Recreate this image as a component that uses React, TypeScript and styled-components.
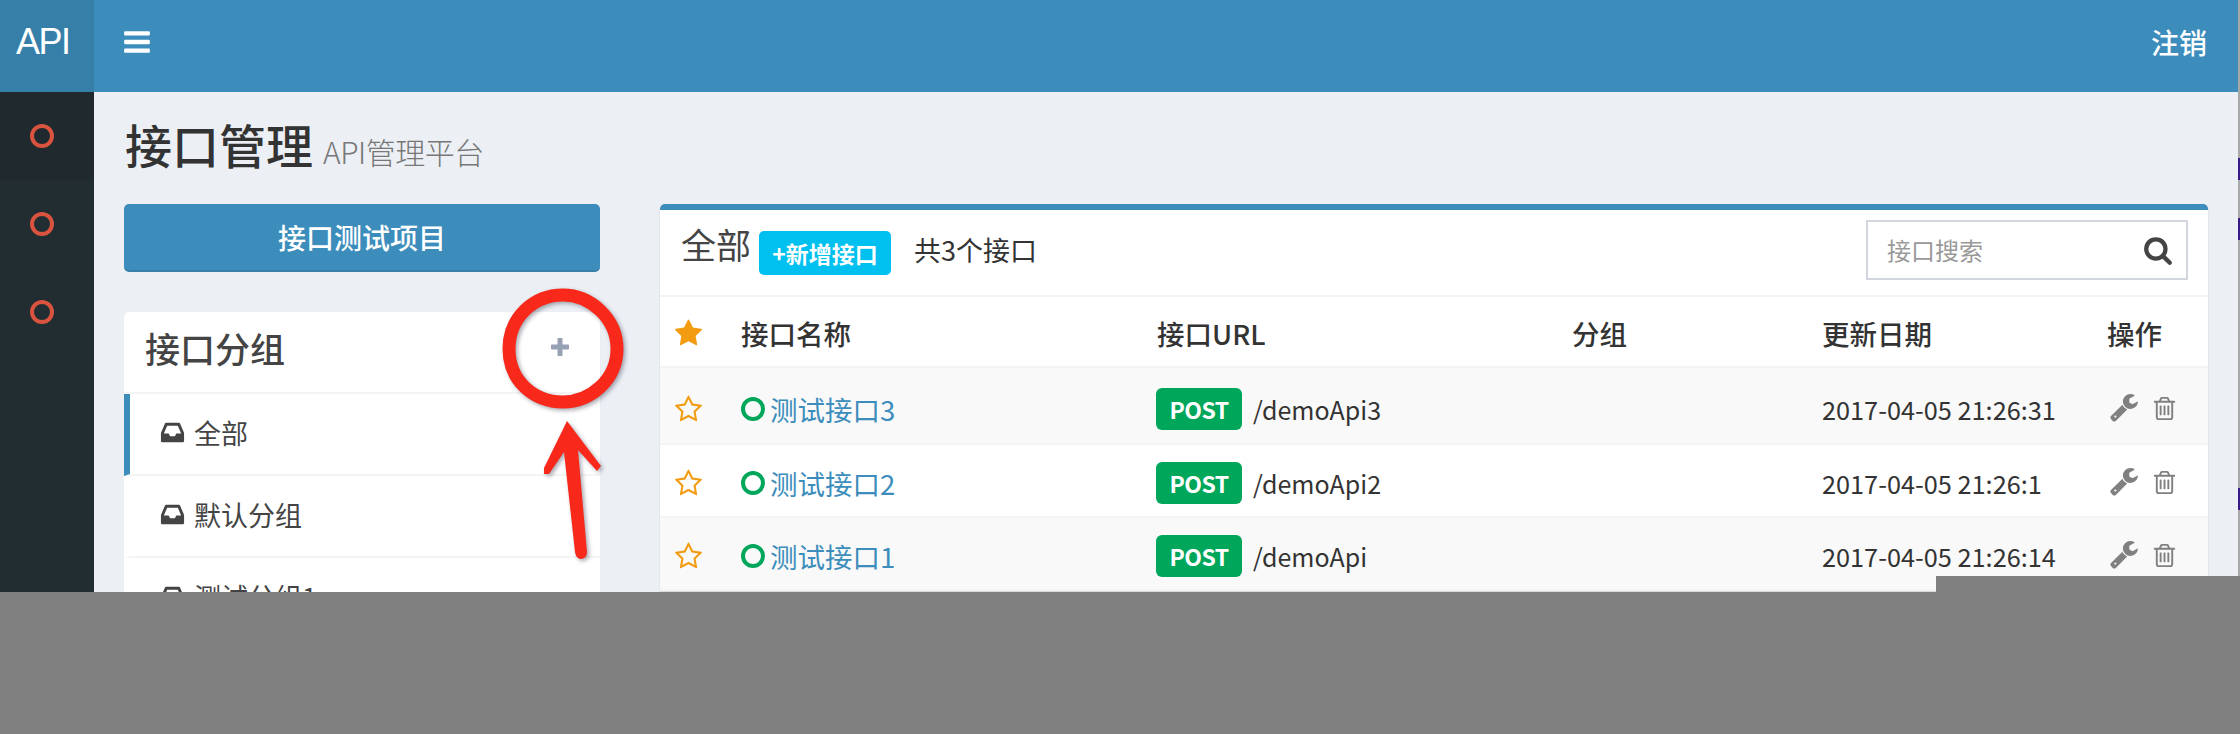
import React from "react";
import styled, { createGlobalStyle } from "styled-components";

const GlobalStyle = createGlobalStyle`
    html, body {
        margin: 0;
        padding: 0;
        background-color: #808080;
    }
    body {
        font-family: "Noto Sans CJK SC", "Noto Sans", sans-serif;
        color: #333;
    }
    * {
        box-sizing: border-box;
    }
`;

const ICONS: Record<string, string> = {
    bars: "M1664 1344v128q0 26-19 45t-45 19h-1408q-26 0-45-19t-19-45v-128q0-26 19-45t45-19h1408q26 0 45 19t19 45zm0-512v128q0 26-19 45t-45 19h-1408q-26 0-45-19t-19-45v-128q0-26 19-45t45-19h1408q26 0 45 19t19 45zm0-512v128q0 26-19 45t-45 19h-1408q-26 0-45-19t-19-45v-128q0-26 19-45t45-19h1408q26 0 45 19t19 45z",
    inbox: "M1151 960h316q-1-3-2.5-8.5t-2.5-7.5l-212-496h-708l-212 496q-1 3-2.5 8.5t-2.5 7.5h316l95 192h320zm513 30v482q0 26-19 45t-45 19h-1408q-26 0-45-19t-19-45v-482q0-62 25-123l238-552q10-25 36.5-42t52.5-17h832q26 0 52.5 17t36.5 42l238 552q25 61 25 123z",
    search: "M1216 832q0-185-131.5-316.5t-316.5-131.5-316.5 131.5-131.5 316.5 131.5 316.5 316.5 131.5 316.5-131.5 131.5-316.5zm512 832q0 52-38 90t-90 38q-54 0-90-38l-343-342q-179 124-399 124-143 0-273.5-55.5t-225-150-150-225-55.5-273.5 55.5-273.5 150-225 225-150 273.5-55.5 273.5 55.5 225 150 150 225 55.5 273.5q0 220-124 399l343 343q37 37 37 90z",
    star: "M1728 647q0 22-26 48l-363 354 86 500q1 7 1 20 0 21-10.5 35.5t-30.5 14.5q-19 0-40-12l-449-236-449 236q-22 12-40 12-21 0-31.5-14.5t-10.5-35.5q0-6 2-20l86-500-364-354q-25-27-25-48 0-37 56-46l502-73 225-455q19-41 49-41t49 41l225 455 502 73q56 9 56 46z",
    starO: "M1201 1004l306-297-422-62-189-382-189 382-422 62 306 297-73 421 378-199 377 199zm527-357q0 22-26 48l-363 354 86 500q1 7 1 20 0 50-41 50-19 0-40-12l-449-236-449 236q-22 12-40 12-21 0-31.5-14.5t-10.5-35.5q0-6 2-20l86-500-364-354q-25-27-25-48 0-37 56-46l502-73 225-455q19-41 49-41t49 41l225 455 502 73q56 9 56 46z",
    wrench: "M384 1344q0-26-19-45t-45-19-45 19-19 45 19 45 45 19 45-19 19-45zm644-420l-682 682q-37 37-90 37-52 0-91-37l-106-108q-38-36-38-90 0-53 38-91l681-681q39 98 114.5 173.5t173.5 114.5zm634-435q0 39-23 106-47 134-164.5 217.5t-258.5 83.5q-185 0-316.5-131.5t-131.5-316.5 131.5-316.5 316.5-131.5q58 0 121.5 16.5t107.5 46.5q16 11 16 28t-16 28l-293 169v224l193 107q5-3 79-48.5t135.5-81 70.5-35.5q15 0 23.5 10t8.5 25z",
    trash: "M704 736v576q0 14-9 23t-23 9h-64q-14 0-23-9t-9-23v-576q0-14 9-23t23-9h64q14 0 23 9t9 23zm256 0v576q0 14-9 23t-23 9h-64q-14 0-23-9t-9-23v-576q0-14 9-23t23-9h64q14 0 23 9t9 23zm256 0v576q0 14-9 23t-23 9h-64q-14 0-23-9t-9-23v-576q0-14 9-23t23-9h64q14 0 23 9t9 23zm128 724v-948h-896v948q0 22 7 40.5t14.5 27 10.5 8.5h832q3 0 10.5-8.5t14.5-27 7-40.5zm-672-1076h448l-48-117q-7-9-17-11h-317q-10 2-17 11zm928 32v64q0 14-9 23t-23 9h-96v948q0 83-47 143.5t-113 60.5h-832q-66 0-113-58.5t-47-141.5v-952h-96q-14 0-23-9t-9-23v-64q0-14 9-23t23-9h309l70-167q15-37 54-63t79-26h320q40 0 79 26t54 63l70 167h309q14 0 23 9t9 23z",
};

const IconSvg = styled.svg<{ $size: number; $color: string }>`
    width: ${(p) => p.$size}px;
    height: ${(p) => p.$size}px;
    flex: none;
    fill: ${(p) => p.$color};
`;

const Icon = ({ name, size, color }: { name: string; size: number; color: string }) => (
    <IconSvg viewBox="0 0 1792 1792" $size={size} $color={color}>
        <path d={ICONS[name]} />
    </IconSvg>
);

const Ring = styled.span<{ $color: string }>`
    display: block;
    flex: none;
    width: 24px;
    height: 24px;
    border-radius: 50%;
    border: 4px solid ${(p) => p.$color};
`;

const Page = styled.div`
    position: relative;
    display: flex;
    height: 592px;
    width: 2240px;
    overflow: hidden;
`;

const Shell = styled.div`
    width: 2238px;
    display: flex;
    flex-direction: column;
    background-color: #ecf0f5;
`;

const EdgeStrip = styled.div`
    position: relative;
    width: 2px;
    background-color: #a8a8a8;
`;

const EdgeTick = styled.span<{ $top: number }>`
    position: absolute;
    left: 0;
    top: ${(p) => p.$top}px;
    width: 2px;
    height: 22px;
    background-color: #3a1a86;
`;

const TopBar = styled.header`
    display: flex;
    align-items: center;
    height: 92px;
    flex: none;
    background-color: #3c8dbc;
    color: #fff;
`;

const Logo = styled.div`
    width: 94px;
    height: 100%;
    flex: none;
    display: flex;
    align-items: center;
    padding: 0 0 8px 16px;
    background-color: #367fa9;
    font-family: "Liberation Sans", sans-serif;
    font-size: 36px;
    letter-spacing: -1.5px;
`;

const MenuToggle = styled.div`
    display: flex;
    margin-left: 28px;
    margin-top: -8px;
`;

const Logout = styled.div`
    margin-left: auto;
    margin-right: 31px;
    font-size: 28px;
    font-weight: 500;
    margin-top: -8px;
`;

const Body = styled.div`
    flex: 1;
    display: flex;
    min-height: 0;
`;

const SideNav = styled.nav`
    width: 94px;
    flex: none;
    background-color: #222d32;
`;

const SideItem = styled.div<{ $active?: boolean }>`
    height: 88px;
    display: flex;
    align-items: center;
    padding-left: 30px;
    background-color: ${(p) => (p.$active ? "#1f292e" : "transparent")};
`;

const Content = styled.main`
    flex: 1;
    padding: 0 30px;
    min-width: 0;
`;

const PageTitle = styled.div`
    height: 112px;
    display: flex;
    align-items: baseline;
    padding: 18px 0 0 1px;
    gap: 10px;
`;

const TitleText = styled.h1`
    margin: 0;
    font-size: 47px;
    line-height: 68px;
    font-weight: 500;
    color: #333;
`;

const TitleSub = styled.small`
    font-size: 30px;
    font-weight: 300;
    color: #777;
    letter-spacing: -0.5px;
`;

const Columns = styled.div`
    display: flex;
    align-items: flex-start;
    gap: 60px;
`;

const LeftColumn = styled.div`
    width: 476px;
    flex: none;
    display: flex;
    flex-direction: column;
    gap: 40px;
`;

const ProjectButton = styled.div`
    height: 68px;
    display: flex;
    align-items: center;
    justify-content: center;
    border-radius: 5px;
    border-bottom: 2px solid #367fa9;
    background-color: #3c8dbc;
    color: #fff;
    font-size: 28px;
    font-weight: 500;
`;

const GroupBox = styled.section`
    background-color: #fff;
    border-radius: 5px 5px 0 0;
    box-shadow: 0 1px 1px rgba(0, 0, 0, 0.1);
`;

const GroupHeader = styled.div`
    height: 82px;
    display: flex;
    align-items: center;
    justify-content: space-between;
    padding: 0 30px 10px 21px;
    border-bottom: 2px solid #f4f4f4;
`;

const GroupTitle = styled.h3`
    margin: 0;
    font-size: 35px;
    font-weight: 500;
    color: #444;
`;

const PlusIcon = styled.svg`
    width: 20px;
    height: 20px;
    fill: #97a0b3;
`;

const GroupItem = styled.div<{ $active?: boolean }>`
    height: 82px;
    display: flex;
    align-items: center;
    gap: 8px;
    padding: 0 0 4px 29px;
    font-size: 27px;
    color: #444;
    border-left: 6px solid ${(p) => (p.$active ? "#3c8dbc" : "transparent")};
    border-bottom: 2px solid #f4f4f4;
`;

const ApiPanel = styled.section`
    flex: 1;
    min-width: 0;
    background-color: #fff;
    border-top: 6px solid #3c8dbc;
    border-radius: 5px 5px 0 0;
    box-shadow: 0 1px 2px rgba(0, 0, 0, 0.12);
`;

const PanelHeader = styled.div`
    height: 87px;
    display: flex;
    align-items: center;
    padding: 0 20px 0 21px;
    border-bottom: 2px solid #f4f4f4;
`;

const PanelTitle = styled.h3`
    margin: -18px 8px 0 0;
    font-size: 35px;
    font-weight: 400;
    color: #444;
`;

const AddButton = styled.div`
    width: 132px;
    height: 44px;
    display: flex;
    align-items: center;
    justify-content: center;
    border-radius: 5px;
    background-color: #00c0ef;
    color: #fff;
    font-size: 23px;
    font-weight: 700;
    white-space: nowrap;
`;

const ApiCount = styled.span`
    margin: -6px 0 0 23px;
    font-size: 27px;
    color: #333;
`;

const SearchBox = styled.div`
    margin: -6px 0 0 auto;
    width: 322px;
    height: 60px;
    display: flex;
    align-items: center;
    justify-content: space-between;
    padding: 0 13px 0 19px;
    border: 2px solid #d2d6de;
    color: #999;
    font-size: 24px;
`;

const TableRow = styled.div<{ $striped?: boolean; $first?: boolean }>`
    display: grid;
    grid-template-columns: 81px 416px 415px 250px 285px 1fr;
    align-items: center;
    height: ${(p) => (p.$first ? 77 : 73)}px;
    padding-top: ${(p) => (p.$first ? 6 : 4)}px;
    font-size: 27.5px;
    color: #333;
    background-color: ${(p) => (p.$striped ? "#f9f9f9" : "#fff")};
    border-bottom: 2px solid #f4f4f4;
`;

const HeadRow = styled(TableRow)`
    height: 71px;
    padding-top: 2px;
    font-weight: 500;
`;

const StarCell = styled.div`
    display: flex;
    padding: 1px 0 0 14px;
`;

const NameCell = styled.div`
    display: flex;
    align-items: center;
    gap: 5px;
    color: #3c8dbc;
`;

const UrlCell = styled.div`
    display: flex;
    align-items: center;
    gap: 11px;
    margin-left: -1px;
    font-size: 25px;
`;

const DateCell = styled.div`
    font-size: 25.3px;
`;

const MethodBadge = styled.span`
    width: 86px;
    height: 42px;
    display: flex;
    align-items: center;
    justify-content: center;
    border-radius: 6px;
    background-color: #00a65a;
    color: #fff;
    font-size: 23px;
    font-weight: 700;
    letter-spacing: -0.5px;
`;

const ActionCell = styled.div`
    display: flex;
    align-items: center;
    gap: 11px;
    margin-left: 3px;
`;

const CornerBlock = styled.div`
    position: absolute;
    right: 0;
    bottom: 0;
    width: 304px;
    height: 16px;
    background-color: #808080;
`;

const Annotation = styled.svg`
    position: absolute;
    left: 490px;
    top: 280px;
    width: 150px;
    height: 290px;
    overflow: visible;
    filter: drop-shadow(2px 2px 2px rgba(60, 60, 80, 0.45));
`;

const groups = ["全部", "默认分组", "测试分组1"];

const apis = [
    { name: "测试接口3", url: "/demoApi3", date: "2017-04-05 21:26:31" },
    { name: "测试接口2", url: "/demoApi2", date: "2017-04-05 21:26:1" },
    { name: "测试接口1", url: "/demoApi", date: "2017-04-05 21:26:14" },
];

export default function App() {
    return (
        <Page>
            <GlobalStyle />
            <Shell>
                <TopBar>
                    <Logo>API</Logo>
                    <MenuToggle>
                        <Icon name="bars" size={30} color="#fff" />
                    </MenuToggle>
                    <Logout>注销</Logout>
                </TopBar>
                <Body>
                    <SideNav>
                        <SideItem $active><Ring $color="#d9533f" /></SideItem>
                        <SideItem><Ring $color="#d9533f" /></SideItem>
                        <SideItem><Ring $color="#d9533f" /></SideItem>
                    </SideNav>
                    <Content>
                        <PageTitle>
                            <TitleText>接口管理</TitleText>
                            <TitleSub>API管理平台</TitleSub>
                        </PageTitle>
                        <Columns>
                            <LeftColumn>
                                <ProjectButton>接口测试项目</ProjectButton>
                                <GroupBox>
                                    <GroupHeader>
                                        <GroupTitle>接口分组</GroupTitle>
                                        <PlusIcon viewBox="0 0 20 20">
                                            <path d="M7.5 2a1 1 0 0 1 1-1h3a1 1 0 0 1 1 1v5.500h5.500a1 1 0 0 1 1 1v3a1 1 0 0 1-1 1h-5.500v5.500a1 1 0 0 1-1 1h-3a1 1 0 0 1-1-1v-5.500h-5.500a1 1 0 0 1-1-1v-3a1 1 0 0 1 1-1h5.500z" />
                                        </PlusIcon>
                                    </GroupHeader>
                                    {groups.map((g, i) => (
                                        <GroupItem key={g} $active={i === 0}>
                                            <Icon name="inbox" size={27} color="#444" />
                                            {g}
                                        </GroupItem>
                                    ))}
                                </GroupBox>
                            </LeftColumn>
                            <ApiPanel>
                                <PanelHeader>
                                    <PanelTitle>全部</PanelTitle>
                                    <AddButton>+新增接口</AddButton>
                                    <ApiCount>共3个接口</ApiCount>
                                    <SearchBox>
                                        接口搜索
                                        <Icon name="search" size={30} color="#444" />
                                    </SearchBox>
                                </PanelHeader>
                                <HeadRow>
                                    <StarCell><Icon name="star" size={29} color="#f39c12" /></StarCell>
                                    <div>接口名称</div>
                                    <div>接口URL</div>
                                    <div>分组</div>
                                    <div>更新日期</div>
                                    <div>操作</div>
                                </HeadRow>
                                {apis.map((api, i) => (
                                    <TableRow key={api.name} $striped={i % 2 === 0} $first={i === 0}>
                                        <StarCell><Icon name="starO" size={29} color="#f39c12" /></StarCell>
                                        <NameCell>
                                            <Ring $color="#00a65a" />
                                            {api.name}
                                        </NameCell>
                                        <UrlCell>
                                            <MethodBadge>POST</MethodBadge>
                                            {api.url}
                                        </UrlCell>
                                        <div />
                                        <DateCell>{api.date}</DateCell>
                                        <ActionCell>
                                            <Icon name="wrench" size={30} color="#808080" />
                                            <Icon name="trash" size={27} color="#808080" />
                                        </ActionCell>
                                    </TableRow>
                                ))}
                            </ApiPanel>
                        </Columns>
                    </Content>
                </Body>
            </Shell>
            <EdgeStrip>
                <EdgeTick $top={158} />
                <EdgeTick $top={218} />
                <EdgeTick $top={488} />
            </EdgeStrip>
            <CornerBlock />
            {/* hand-drawn red marker around the add-group button */}
            <Annotation viewBox="490 280 150 290">
                <path
                    d="M563 295 C 590 295 617 318 617 349 C 617 380 590 402 563 402 C 533 402 509 380 509 349 C 509 318 533 295 563 295 Z"
                    fill="none"
                    stroke="#f8291b"
                    strokeWidth="13"
                />
                <path
                    d="M567 421 L601 466 L597 471 L578 450 L587 552 Q587 558 581 559 Q576 559 575 552 L564 452 L549 474 L544 474 L544 468 Z"
                    fill="#f8291b"
                />
            </Annotation>
        </Page>
    );
}
